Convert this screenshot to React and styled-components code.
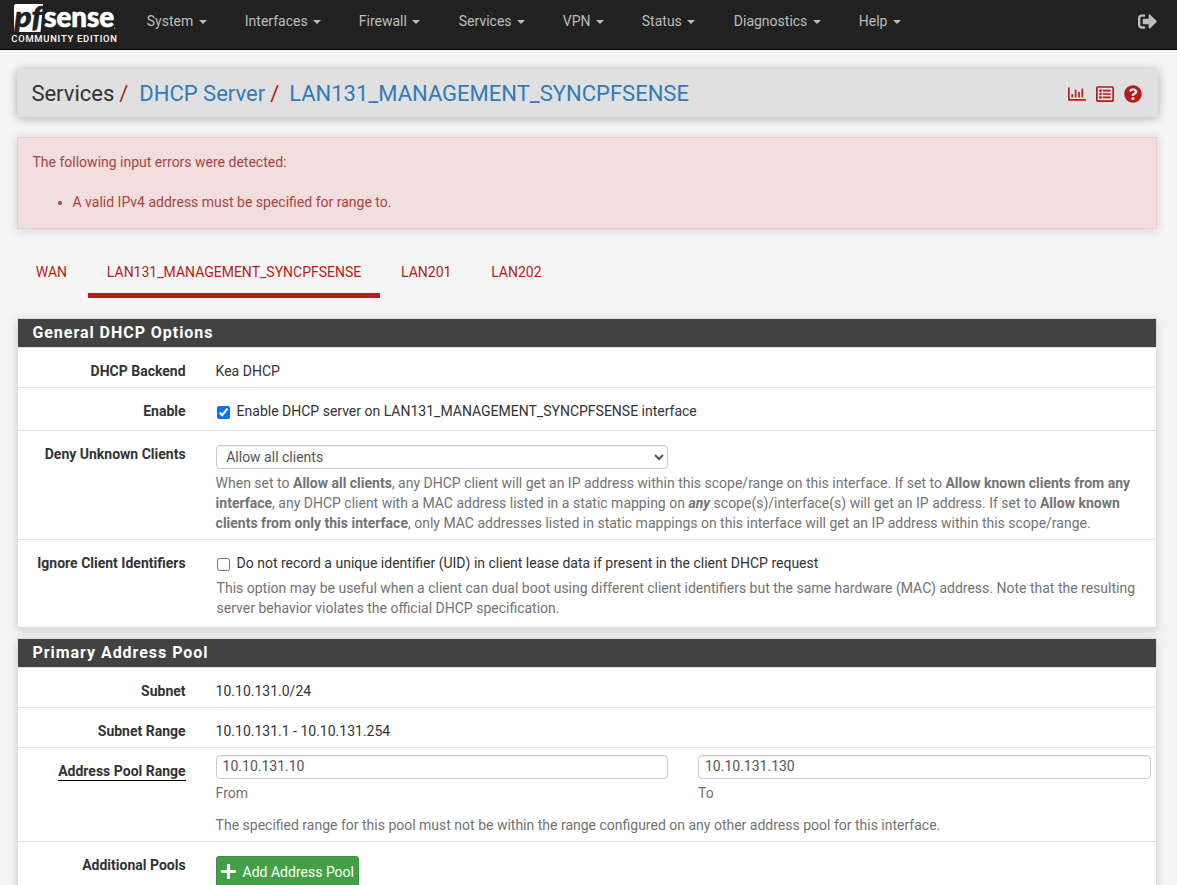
import React from "react";
import styled, { createGlobalStyle, css } from "styled-components";
import { FaSignOutAlt, FaRegChartBar, FaRegListAlt, FaQuestionCircle, FaPlus } from "react-icons/fa";

const Global = createGlobalStyle`
  *, *::before, *::after { box-sizing: border-box; }
  html, body { margin: 0; height: 885px; overflow: hidden; }
  body {
    background: #f5f5f5;
    color: #333;
    font: 14px/20px Roboto, "Liberation Sans", sans-serif;
  }
  a { text-decoration: none; color: inherit; }
`;

const Navbar = styled.nav`
  display: flex;
  align-items: flex-start;
  height: 50px;
  background: #212121;
  border-bottom: 1px solid #000;
`;

const Brand = styled.a`
  display: block;
  width: 131.8px;
  height: 49px;
`;

const NavItem = styled.a`
  display: flex;
  align-items: center;
  height: 42px;
  width: ${(p) => p.$w}px;
  padding-left: 15px;
  color: #bdbdbd;
`;

const Caret = styled.span`
  width: 8px;
  margin: 2px 0 0 5.5px;
  border-top: 4px solid;
  border-left: 4px solid transparent;
  border-right: 4px solid transparent;
`;

const Logout = styled.a`
  display: flex;
  margin: 12px 20px 0 auto;
  color: #bdbdbd;
  font-size: 19px;
`;

const Page = styled.main`
  padding: 19px 20px 0 17px;
`;

const Header = styled.header`
  display: flex;
  align-items: center;
  justify-content: space-between;
  height: 48px;
  margin-right: -1px;
  padding: 0 16.5px 0 14.4px;
  background: #e0e0e0;
  border-radius: 2px;
  box-shadow: 0 1px 10px rgba(0, 0, 0, 0.3);
`;

const Crumbs = styled.div`
  display: flex;
  padding-top: 2px;
  font-size: 22px;
  line-height: 46px;
  white-space: pre;
`;

const Crumb = styled.a`
  color: ${(p) => (p.$link ? "#337ab7" : "#333")};
`;

const Slash = styled.span`
  width: ${(p) => p.$w}px;
  padding-left: 5px;
  color: #b71c1c;
`;

const HeaderIcons = styled.div`
  display: flex;
  align-items: center;
  gap: 10px;
  padding-top: 2px;
  color: #b71c1c;
  font-size: 18px;
`;

const Alert = styled.section`
  height: 92px;
  margin-top: 20px;
  padding: 14px 15px 15px 14.5px;
  color: #a94442;
  background: #f2dede;
  border: 1px solid #ebccd1;
  box-shadow: 0 1px 10px rgba(0, 0, 0, 0.15);
`;

const ErrorList = styled.ul`
  margin: 20px 0 0;
  padding-left: 40px;
`;

const Tabs = styled.div`
  display: flex;
  height: 69px;
  margin-bottom: 20px;
  padding-top: 17px;
`;

const Tab = styled.a`
  height: 52px;
  padding: 16px 18.9px 0 18.8px;
  margin-right: 2.1px;
  color: #b71c1c;
  border-bottom: 5px solid ${(p) => (p.$active ? "#b71c1c" : "transparent")};
`;

const Panel = styled.section`
  background: #fff;
  border: 1px solid #ddd;
  margin-bottom: 10px;
  box-shadow: 0 3px 10px rgba(0, 0, 0, 0.15);
`;

const PanelTitle = styled.h2`
  height: 28px;
  margin: 0;
  padding-left: 14.4px;
  color: #fff;
  background: #424242;
  font-size: 16px;
  font-weight: 700;
  line-height: 28px;
  letter-spacing: 0.96px;
`;

const Row = styled.div`
  display: flex;
  height: ${(p) => p.$h}px;
  border-top: 1px solid #e0e0e0;
`;

const Label = styled.label`
  width: 167.6px;
  padding-top: 13px;
  font-weight: 700;
  text-align: right;
  white-space: nowrap;
  span {
    display: inline-block;
    border-bottom: 1px solid #000;
    line-height: 18px;
  }
`;

const Field = styled.div`
  flex: 1;
  min-width: 0;
  padding: ${(p) => p.$top || 13}px 5px 0 30px;
`;

const CheckLine = styled.label`
  display: flex;
  input { width: 13px; height: 13px; margin: 5px 7px 0 1px; }
`;

const Help = styled.p`
  margin: ${(p) => p.$mt || 0}px 0 0 ${(p) => p.$ml || 0}px;
  color: #737373;
  white-space: nowrap;
`;

const HelpLine = styled.span`
  display: block;
`;

const control = css`
  display: block;
  height: 24px;
  color: #555;
  background: #fff;
  border: 1px solid #ccc;
  border-radius: 4px;
  box-shadow: inset 0 1px 1px rgba(0, 0, 0, 0.075);
  font: inherit;
`;

const Select = styled.select`
  ${control}
  width: 452px;
  padding: 0 5.6px;
`;

const Input = styled.input`
  ${control}
  width: 100%;
  padding: 0 6px 2px;
`;

const Pair = styled.div`
  display: grid;
  grid-template-columns: 452.4px 453px;
  column-gap: 30px;
`;

const AddButton = styled.button`
  display: flex;
  align-items: center;
  gap: 5.5px;
  width: 143px;
  height: 32px;
  padding: 0 4px 1px 3.5px;
  color: #fff;
  background: #43a047;
  border: 1px solid #388e3c;
  border-radius: 3px;
  font: inherit;
  white-space: nowrap;
  svg { font-size: 17px; flex: none; }
`;

const menu = [
  ["System", 98], ["Interfaces", 114], ["Firewall", 100], ["Services", 104],
  ["VPN", 79], ["Status", 92], ["Diagnostics", 125], ["Help", 80],
];

function Logo() {
  return (
    <svg width="131" height="49" viewBox="0 0 131 49" fontFamily="Lato, sans-serif">
      <path d="M16 4H43L40.500 32H14V6Q14 4 16 4Z" fill="#fff" />
      <text x="14.500" y="27" fontSize="28" fontWeight="900" fontStyle="italic" fill="#212121" stroke="#212121" strokeWidth="0.6" textLength="27.500" lengthAdjust="spacingAndGlyphs">pf</text>
      <text x="44.200" y="27.300" fontSize="27.500" fontWeight="900" fill="#fff" stroke="#fff" strokeWidth="0.6" textLength="70" lengthAdjust="spacingAndGlyphs">sense</text>
      <circle cx="114.700" cy="28.300" r="0.7" fill="#999" />
      <text x="11.300" y="42" fontFamily="Roboto, sans-serif" fontSize="9.400" fontWeight="500" fill="#fff" textLength="105.700">COMMUNITY EDITION</text>
    </svg>
  );
}

export default function App() {
  return (
    <>
      <Global />
      <Navbar>
        <Brand><Logo /></Brand>
        {menu.map(([name, w]) => (
          <NavItem key={name} $w={w}>{name}<Caret /></NavItem>
        ))}
        <Logout><FaSignOutAlt /></Logout>
      </Navbar>
      <Page>
        <Header>
          <Crumbs>
            <Crumb>Services</Crumb><Slash $w={25}>/</Slash>
            <Crumb $link>DHCP Server</Crumb><Slash $w={24}>/</Slash>
            <Crumb $link>LAN131_MANAGEMENT_SYNCPFSENSE</Crumb>
          </Crumbs>
          <HeaderIcons><FaRegChartBar /><FaRegListAlt /><FaQuestionCircle /></HeaderIcons>
        </Header>
        <Alert>
          The following input errors were detected:
          <ErrorList><li>A valid IPv4 address must be specified for range to.</li></ErrorList>
        </Alert>
        <Tabs>
          <Tab>WAN</Tab>
          <Tab $active>LAN131_MANAGEMENT_SYNCPFSENSE</Tab>
          <Tab>LAN201</Tab>
          <Tab>LAN202</Tab>
        </Tabs>
        <Panel>
          <PanelTitle>General DHCP Options</PanelTitle>
          <Row $h={40}><Label>DHCP Backend</Label><Field>Kea DHCP</Field></Row>
          <Row $h={43}>
            <Label>Enable</Label>
            <Field><CheckLine><input type="checkbox" defaultChecked />Enable DHCP server on LAN131_MANAGEMENT_SYNCPFSENSE interface</CheckLine></Field>
          </Row>
          <Row $h={109}>
            <Label>Deny Unknown Clients</Label>
            <Field $top={14}>
              <Select><option>Allow all clients</option></Select>
              <Help $mt={4}>
                <HelpLine>When set to <b>Allow all clients</b>, any DHCP client will get an IP address within this scope/range on this interface. If set to <b>Allow known clients from any</b></HelpLine>
                <HelpLine><b>interface</b>, any DHCP client with a MAC address listed in a static mapping on <b><i>any</i></b> scope(s)/interface(s) will get an IP address. If set to <b>Allow known</b></HelpLine>
                <HelpLine><b>clients from only this interface</b>, only MAC addresses listed in static mappings on this interface will get an IP address within this scope/range.</HelpLine>
              </Help>
            </Field>
          </Row>
          <Row $h={88}>
            <Label>Ignore Client Identifiers</Label>
            <Field>
              <CheckLine><input type="checkbox" />Do not record a unique identifier (UID) in client lease data if present in the client DHCP request</CheckLine>
              <Help $mt={5} $ml={1}>
                <HelpLine>This option may be useful when a client can dual boot using different client identifiers but the same hardware (MAC) address. Note that the resulting</HelpLine>
                <HelpLine>server behavior violates the official DHCP specification.</HelpLine>
              </Help>
            </Field>
          </Row>
        </Panel>
        <Panel>
          <PanelTitle>Primary Address Pool</PanelTitle>
          <Row $h={40}><Label>Subnet</Label><Field>10.10.131.0/24</Field></Row>
          <Row $h={40}><Label>Subnet Range</Label><Field>10.10.131.1 - 10.10.131.254</Field></Row>
          <Row $h={94}>
            <Label><span>Address Pool Range</span></Label>
            <Field $top={7}>
              <Pair>
                <Input defaultValue="10.10.131.10" />
                <Input defaultValue="10.10.131.130" />
                <Help $mt={4}>From</Help>
                <Help $mt={4}>To</Help>
              </Pair>
              <Help $mt={12}>The specified range for this pool must not be within the range configured on any other address pool for this interface.</Help>
            </Field>
          </Row>
          <Row $h={60}>
            <Label>Additional Pools</Label>
            <Field $top={14}><AddButton><FaPlus />Add Address Pool</AddButton></Field>
          </Row>
        </Panel>
      </Page>
    </>
  );
}
